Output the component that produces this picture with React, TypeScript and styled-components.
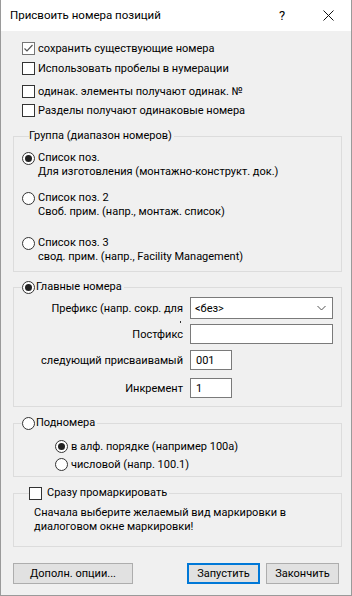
import React from 'react';
import styled, { createGlobalStyle, css } from 'styled-components';

const GlobalStyle = createGlobalStyle`
  html, body {
    margin: 0;
    padding: 0;
    background: #ffffff;
  }
  body {
    font-family: Roboto, 'Liberation Sans', Arial, sans-serif;
    font-size: 11px;
    color: #000;
  }
`;

const Window = styled.div`
  width: 352px;
  height: 596px;
  box-sizing: border-box;
  border: 1px solid #9a9a9a;
  border-top: none;
  display: flex;
  flex-direction: column;
  background: #f0f0f0;
`;

const TitleBar = styled.div`
  height: 31px;
  flex: none;
  background: #ffffff;
  display: flex;
  align-items: center;
`;

const Title = styled.div`
  flex: 1;
  padding-left: 9px;
  padding-bottom: 1px;
  font-size: 11.5px;
`;

const CaptionButton = styled.div`
  width: 46px;
  height: 31px;
  display: flex;
  align-items: center;
  justify-content: center;
  font-size: 13px;
`;

const Body = styled.div`
  flex: 1;
  padding: 0 10px 0 11px;
  display: flex;
  flex-direction: column;
`;

const Row = styled.label<{ $mt?: number; $indent?: number }>`
  display: flex;
  align-items: center;
  height: 18px;
  gap: 3px;
  margin-top: ${(p) => p.$mt ?? 0}px;
  padding-left: ${(p) => p.$indent ?? 0}px;
`;

const Box = styled.span<{ $dim?: boolean }>`
  width: 13px;
  height: 13px;
  box-sizing: border-box;
  flex: none;
  border: 1px solid ${(p) => (p.$dim ? '#777' : '#333')};
  background: #fff;
  display: flex;
  align-items: center;
  justify-content: center;
`;

const Radio = styled.span<{ $on?: boolean }>`
  width: 13px;
  height: 13px;
  box-sizing: border-box;
  flex: none;
  border: 1px solid #333;
  border-radius: 50%;
  background: #fff;
  position: relative;
  ${(p) =>
    p.$on &&
    css`
      &::after {
        content: '';
        position: absolute;
        left: 2px;
        top: 2px;
        width: 7px;
        height: 7px;
        border-radius: 50%;
        background: #222;
      }
    `}
`;

const Group = styled.fieldset<{ $mt: number; $pt: number; $pb: number; $pl?: number }>`
  margin: ${(p) => p.$mt}px 0 0 1px;
  padding: ${(p) => p.$pt}px 6px ${(p) => p.$pb}px ${(p) => p.$pl ?? 8}px;
  border: 1px solid #dcdcdc;
  min-inline-size: 0;
  width: 329px;
  box-sizing: border-box;
`;

const Legend = styled.legend<{ $pl?: number }>`
  padding: 0 2px 0 0;
  margin-left: ${(p) => p.$pl ?? 7}px;
  line-height: 14px;
  display: flex;
  align-items: center;
  gap: 1px;
`;

const RadioItem = styled.div<{ $mt?: number }>`
  display: flex;
  align-items: flex-start;
  gap: 3px;
  margin-top: ${(p) => p.$mt ?? 0}px;
  line-height: 14px;
  & > span:first-child {
    margin-top: 1px;
  }
`;

const FieldRow = styled.div<{ $mt?: number }>`
  display: flex;
  align-items: center;
  margin-top: ${(p) => p.$mt ?? 0}px;
`;

const FieldLabel = styled.div<{ $clip?: boolean }>`
  width: 169px;
  margin-right: 7px;
  text-align: right;
  white-space: nowrap;
  position: relative;
  ${(p) =>
    p.$clip &&
    css`
      &::after {
        content: '';
        position: absolute;
        right: 2px;
        bottom: -8px;
        width: 1px;
        height: 2px;
        background: #333;
      }
    `}
`;

const Combo = styled.div`
  width: 143px;
  height: 22px;
  box-sizing: border-box;
  border: 1px solid #7a7a7a;
  background: #fff;
  display: flex;
  align-items: center;
  justify-content: space-between;
  padding: 0 6px 0 4px;
`;

const Edit = styled.div<{ $w: number }>`
  width: ${(p) => p.$w}px;
  height: 20px;
  box-sizing: border-box;
  border: 1px solid #7a7a7a;
  background: #fff;
  display: flex;
  align-items: center;
  padding: 1px 0 0 5px;
`;

const Note = styled.div`
  line-height: 14px;
  padding-left: 12px;
`;

const ButtonBar = styled.div`
  display: flex;
  margin-top: 16px;
  margin-left: 1px;
  gap: 6px;
`;

const Button = styled.div<{ $w: number; $default?: boolean; $ml?: number }>`
  width: ${(p) => p.$w}px;
  height: 21px;
  box-sizing: border-box;
  background: #e1e1e1;
  border: 1px solid ${(p) => (p.$default ? '#0078d7' : '#adadad')};
  ${(p) => p.$default && 'box-shadow: inset 0 0 0 1px #0078d7;'}
  margin-left: ${(p) => p.$ml ?? 0}px;
  display: flex;
  align-items: center;
  justify-content: center;
`;

const Check = () => (
  <svg width="11" height="11" viewBox="0 0 11 11">
    <polyline points="1.5,5.5 4,8 9.5,2" fill="none" stroke="#555" strokeWidth="1.2" />
  </svg>
);

const Chevron = () => (
  <svg width="9" height="6" viewBox="0 0 9 6">
    <polyline points="0.5,1 4.5,5 8.5,1" fill="none" stroke="#555" strokeWidth="1" />
  </svg>
);

const CloseIcon = () => (
  <svg width="11" height="11" viewBox="0 0 11 11">
    <path d="M0.5 0.5 L10.5 10.5 M10.5 0.5 L0.5 10.5" stroke="#111" strokeWidth="1" />
  </svg>
);

const App = () => {
  return (
    <>
      <GlobalStyle />
      <Window>
        <TitleBar>
          <Title>Присвоить номера позиций</Title>
          <CaptionButton>?</CaptionButton>
          <CaptionButton>
            <CloseIcon />
          </CaptionButton>
        </TitleBar>
        <Body>
          <Row $mt={8} $indent={10}>
            <Box $dim>
              <Check />
            </Box>
            сохранить существующие номера
          </Row>
          <Row $mt={2} $indent={10}>
            <Box />
            Использовать пробелы в нумерации
          </Row>
          <Row $mt={5} $indent={10}>
            <Box />
            одинак. элементы получают одинак. №
          </Row>
          <Row $mt={1} $indent={10}>
            <Box />
            Разделы получают одинаковые номера
          </Row>

          {/* Группа */}
          <Group $mt={10} $pt={8} $pb={7}>
            <Legend>Группа (диапазон номеров)</Legend>
            <RadioItem>
              <Radio $on />
              <div>
                Список поз.
                <br />
                Для изготовления (монтажно-конструкт. док.)
              </div>
            </RadioItem>
            <RadioItem $mt={12}>
              <Radio />
              <div>
                Список поз. 2
                <br />
                Своб. прим. (напр., монтаж. список)
              </div>
            </RadioItem>
            <RadioItem $mt={17}>
              <Radio />
              <div>
                Список поз. 3
                <br />
                свод. прим. (напр., Facility Management)
              </div>
            </RadioItem>
          </Group>

          {/* Главные номера */}
          <Group $mt={8} $pt={3} $pb={8} $pl={0}>
            <Legend $pl={8}>
              <Radio $on />
              Главные номера
            </Legend>
            <FieldRow>
              <FieldLabel $clip>Префикс (напр. сокр. для</FieldLabel>
              <Combo>
                &lt;без&gt;
                <Chevron />
              </Combo>
            </FieldRow>
            <FieldRow $mt={5}>
              <FieldLabel>Постфикс</FieldLabel>
              <Edit $w={143} />
            </FieldRow>
            <FieldRow $mt={6}>
              <FieldLabel>следующий присваивамый</FieldLabel>
              <Edit $w={42}>001</Edit>
            </FieldRow>
            <FieldRow $mt={8}>
              <FieldLabel>Инкремент</FieldLabel>
              <Edit $w={42}>1</Edit>
            </FieldRow>
          </Group>

          {/* Подномера */}
          <Group $mt={9} $pt={7} $pb={3} $pl={0}>
            <Legend $pl={8}>
              <Radio />
              Подномера
            </Legend>
            <Row $indent={41}>
              <Radio $on />в алф. порядке (например 100а)
            </Row>
            <Row $indent={41}>
              <Radio />
              числовой (напр. 100.1)
            </Row>
          </Group>

          {/* Маркировка */}
          <Group $mt={9} $pt={6} $pb={12} $pl={8}>
            <Legend>
              <Box />
              <span style={{ marginLeft: 4 }}>Сразу промаркировать</span>
            </Legend>
            <Note>
              Сначала выберите желаемый вид маркировки в
              <br />
              диалоговом окне маркировки!
            </Note>
          </Group>

          <ButtonBar>
            <Button $w={120}>Дополн. опции...</Button>
            <Button $w={73} $default $ml={48}>
              Запустить
            </Button>
            <Button $w={73}>Закончить</Button>
          </ButtonBar>
        </Body>
      </Window>
    </>
  );
};

export default App;
